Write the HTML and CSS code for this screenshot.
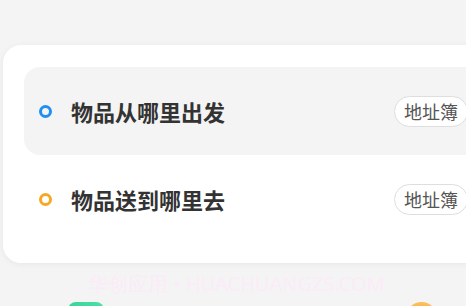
FILE: index.html
```html
<!DOCTYPE html>
<html lang="zh">
<head>
<meta charset="utf-8">
<link rel="stylesheet" href="styles.css">
</head>
<body>
<div class="page">
  <div class="card">
    <div class="row active">
      <span class="dot dot-blue"></span>
      <span class="title">物品从哪里出发</span>
      <span class="book">地址簿</span>
    </div>
    <div class="row">
      <span class="dot dot-orange"></span>
      <span class="title">物品送到哪里去</span>
      <span class="book">地址簿</span>
    </div>
  </div>
  <div class="watermark">华创应用 • HUACHUANGZS.COM</div>
  <div class="bottom">
    <span class="green"></span>
    <span class="orange"></span>
  </div>
</div>
</body>
</html>
```
FILE: styles.css
```css
html, body {
  margin: 0;
  padding: 0;
  background: #f4f4f4;
}
.page {
  width: 466px;
  height: 306px;
  overflow: hidden;
  box-sizing: border-box;
  padding-top: 45px;
  padding-left: 3px;
  font-family: "Noto Sans CJK SC", "Noto Sans", sans-serif;
}
.card {
  width: 490px;
  background: #fff;
  border-radius: 18px;
  box-shadow: 0 1px 6px rgba(0,0,0,0.06);
  padding: 22px 0 20px 21px;
  box-sizing: border-box;
}
.row {
  height: 88px;
  display: flex;
  align-items: center;
  border-radius: 16px;
  padding-left: 15px;
}
.row.active {
  background: #f4f4f4;
}
.dot {
  width: 13px;
  height: 13px;
  box-sizing: border-box;
  border-radius: 50%;
  border: 3.5px solid #1f8ef5;
  flex: none;
}
.dot-orange {
  border-color: #f7a823;
}
.title {
  margin-left: 19px;
  font-size: 22px;
  font-weight: 700;
  color: #333;
  flex: 1;
}
.book {
  margin-right: 25px;
  height: 31px;
  box-sizing: border-box;
  border: 1px solid #dedede;
  border-radius: 16px;
  background: #fff;
  font-size: 18px;
  line-height: 28px;
  color: #555;
  width: 74px;
  text-align: center;
  white-space: nowrap;
}
.watermark {
  margin-top: 8px;
  margin-left: 85px;
  font-family: "Noto Sans", sans-serif;
  font-size: 20px;
  line-height: 26px;
  color: #fcebf8;
  white-space: nowrap;
}
.bottom {
  display: flex;
  justify-content: space-between;
  padding: 5px 29px 0 65px;
}
.green {
  width: 36px;
  height: 30px;
  border-radius: 8px;
  background: linear-gradient(90deg, #3ad497, #4ce0a6);
}
.orange {
  width: 31px;
  height: 31px;
  border-radius: 50%;
  background: linear-gradient(180deg, #fdbe5a, #f9a33c);
}
```
